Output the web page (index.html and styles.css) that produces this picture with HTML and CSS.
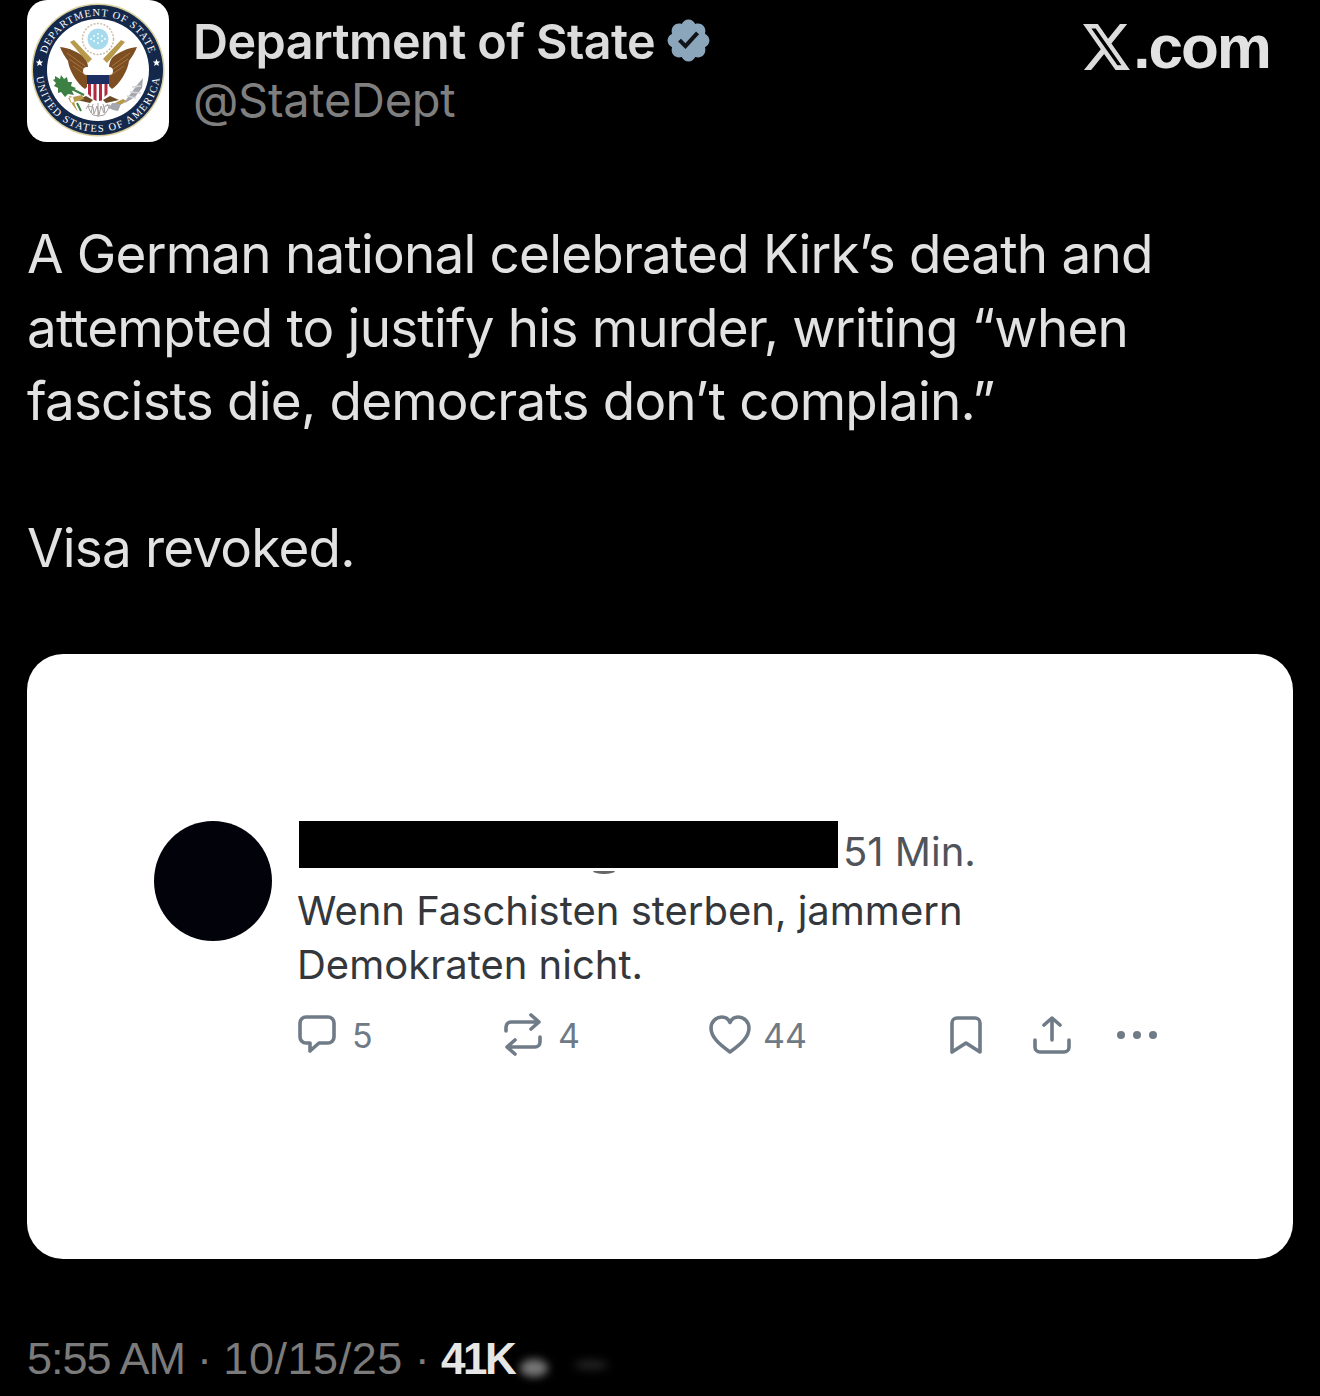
FILE: index.html
```html
<!DOCTYPE html>
<html lang="en">
<head>
<meta charset="utf-8">
<title>Department of State</title>
<link rel="stylesheet" href="styles.css">
</head>
<body>
<main class="post">
  <header class="head">
    <div class="seal">
      <svg viewBox="0 0 142 142" width="142" height="142">
        <defs>
          <path id="arcTop" d="M17 70a54 54 0 0 1 108 0"/>
          <path id="arcBottom" d="M9 70a62 62 0 0 0 124 0"/>
        </defs>
        <circle cx="71" cy="70" r="66.500" fill="#d9cf9c"/>
        <circle cx="71" cy="70" r="65" fill="#14284b"/>
        <circle cx="71" cy="70" r="51" fill="#fff"/>
        <text class="ring"><textPath href="#arcTop" startOffset="50%" text-anchor="middle">DEPARTMENT OF STATE</textPath></text>
        <text class="ring ring-low"><textPath href="#arcBottom" startOffset="50%" text-anchor="middle">UNITED STATES OF AMERICA</textPath></text>
        <path d="M12.500 59l1.100 2.400 2.600.2-2 1.700.7 2.600-2.400-1.400-2.300 1.400.6-2.600-2-1.700 2.600-.2zM129.500 59l1.100 2.400 2.600.2-2 1.700.7 2.600-2.400-1.400-2.300 1.400.6-2.600-2-1.700 2.600-.2z" fill="#fff"/>
        <circle cx="71" cy="39" r="15.500" fill="#fff" stroke="#c9b9a4" stroke-width="1.400" stroke-dasharray="2 1.400"/>
        <circle cx="71" cy="39" r="10.500" fill="#a6dbee"/>
        <g fill="#fff"><circle cx="71" cy="34" r=".9"/><circle cx="67" cy="36" r=".9"/><circle cx="75" cy="36" r=".9"/><circle cx="71" cy="38" r=".9"/><circle cx="67" cy="41" r=".9"/><circle cx="75" cy="41" r=".9"/><circle cx="71" cy="43" r=".9"/><circle cx="64" cy="39" r=".9"/><circle cx="78" cy="39" r=".9"/></g>
        <path d="M33 47c9 1 19 5 25 11 2 3 3 6 3 10v18l-3 3C50 84 42 70 41 61c-3-4-6-9-8-14z" fill="#7d4e22"/>
        <path d="M110 47c-9 1-19 5-25 11-2 3-3 6-3 10v18l3 3c8-5 16-19 17-28 3-4 6-9 8-14z" fill="#7d4e22"/>
        <path d="M40 53l18 13M46 66l13 9M42 59l16 11M103 53l-18 13M97 66l-13 9M101 59l-16 11" stroke="#a5763f" stroke-width="1" fill="none"/>
        <path d="M43 42l4-2 18 19-4 4zM98 42l-4-2-18 19 4 4z" fill="#b79a4b"/>
        <path d="M64 72c0-5 2-9 7-10 3 0 5 1 6 4l3 2-1 5H63z" fill="#fff"/>
        <circle cx="60" cy="71" r="4" fill="#fff"/><circle cx="82" cy="71" r="4" fill="#fff"/>
        <path d="M60 78h22v12c0 6-6 9-11 11-5-2-11-5-11-11z" fill="#fff"/>
        <path d="M61 84h3v13l-3-3zM66.500 84h3v17l-3-1.500zM72 84h3v16.500l-3 .5zM77.500 84h3v10l-3 3z" fill="#b0293c"/>
        <path d="M60 75h22v9H60z" fill="#1b2f63"/>
        <path d="M50 100l9-4 7 4-3 3zM92 100l-9-4-7 4 3 3z" fill="#6b4a25"/>
        <path d="M61 106l5 1 1 7 3-8 2 9 2-9 3 7 1-7 5-1-3 6-3 4-5 1-6-1-3-4z" fill="#fff" stroke="#a79f9f" stroke-width="1"/>
        <path d="M71 103v14M66 104l-2 9M76 104l2 9M62 104l-3 5M80 104l3 5" stroke="#a79f9f" stroke-width="1"/>
        <path d="M28 76l5 3 1-4 3 4 3-2 1 5 4 0-1 4 5 2-4 3 2 4-6-1-3 3-4-5-3 1 0-5-4-2 2-3-3-3 2-1z" fill="#3c8044"/>
        <path d="M43 88l14 7" stroke="#3c8044" stroke-width="2"/>
        <path d="M42 96l3 8 6 8-3-7-2-8zM41 98l14-3 2 4-13 4z" fill="#b79a4b"/>
        <path d="M50 103l4 8" stroke="#3c8044" stroke-width="2"/>
        <path d="M86 104l10-5 4 2-10 6z" fill="#b79a4b"/>
        <path d="M99 100l11-15 6-7-1 10-7 9-10 6z" fill="#a4a7ad"/>
        <path d="M105 87l9-1M103 92l11 1M100 96l9 2" stroke="#d5d7da" stroke-width="1.500"/>
        <path d="M85 103l-3 5 4 2 5 1 3-7z" fill="#a4a7ad"/>
      </svg>
    </div>
    <div class="identity">
      <div class="name-row">
        <span class="name">Department of State</span>
        <svg class="badge" viewBox="0 0 24 24" width="49" height="49"><path fill="#8ba5bb" d="M22.250 12c0-1.430-.880-2.670-2.190-3.340.460-1.390.200-2.900-.810-3.910s-2.520-1.270-3.910-.81c-.660-1.310-1.910-2.190-3.340-2.190s-2.670.880-3.330 2.190c-1.400-.460-2.910-.200-3.920.810s-1.260 2.520-.800 3.910c-1.310.670-2.200 1.910-2.200 3.340s.890 2.670 2.200 3.340c-.460 1.390-.210 2.900.800 3.910s2.520 1.260 3.910.810c.670 1.310 1.910 2.190 3.340 2.190s2.680-.880 3.340-2.190c1.390.450 2.900.200 3.910-.810s1.270-2.520.810-3.910c1.310-.670 2.190-1.910 2.190-3.340z"/><path fill="#101418" d="M10.540 16.200l-3.650-3.650 1.410-1.410 2.180 2.180 5.220-5.680 1.470 1.350z"/></svg>
      </div>
      <div class="handle">@StateDept</div>
    </div>
    <div class="brand">
      <svg class="x-logo" viewBox="1.250 2.250 21.600 19.500" width="47" height="46" preserveAspectRatio="none"><path fill="#dcdcdc" d="M18.244 2.250h3.308l-7.227 8.260 8.502 11.240H16.170l-5.214-6.817L4.990 21.750H1.680l7.730-8.835L1.254 2.250H8.080l4.713 6.231zm-1.161 17.520h1.833L7.084 4.126H5.117z"/></svg>
      <span class="dotcom">.com</span>
    </div>
  </header>

  <section class="body-text">
    <p>A German national celebrated Kirk’s death and<br>attempted to justify his murder, writing “when<br>fascists die, democrats don’t complain.”</p>
    <p>Visa revoked.</p>
  </section>

  <figure class="card">
    <div class="avatar"></div>
    <div class="reply">
      <div class="reply-head">
        <div class="redaction"></div>
        <span class="age">51 Min.</span>
        <span class="tail"></span>
      </div>
      <p class="reply-text">Wenn Faschisten sterben, jammern<br>Demokraten nicht.</p>
      <div class="actions">
        <div class="action a-reply">
          <svg viewBox="0 0 40 44" width="40" height="44"><path d="M9 4h22a6 6 0 0 1 6 6v14a6 6 0 0 1-6 6h-9l-9 8v-8H9a6 6 0 0 1-6-6V10a6 6 0 0 1 6-6z"/></svg>
          <span>5</span>
        </div>
        <div class="action a-repost">
          <svg viewBox="0 0 40 44" width="40" height="44"><path d="M3 18v-4a5 5 0 0 1 5-5h28M28 2l8 7-8 7M37 24v5a5 5 0 0 1-5 5H4M12 27l-8 7 8 7"/></svg>
          <span>4</span>
        </div>
        <div class="action a-like">
          <svg viewBox="0 0 42 40" width="42" height="40"><path d="M21 37C10 29 2 22 2 13 2 7 7 2 12.500 2c4 0 7 2 8.500 5.500C22.500 4 25.500 2 29.500 2 35 2 40 7 40 13c0 9-8 16-19 24z"/></svg>
          <span>44</span>
        </div>
        <div class="action a-save">
          <svg viewBox="0 0 34 40" width="34" height="40"><path d="M3 37V8a5 5 0 0 1 5-5h18a5 5 0 0 1 5 5v29l-14-9z"/></svg>
        </div>
        <div class="action a-share">
          <svg viewBox="0 0 40 40" width="40" height="40"><path d="M20 25V3M12 10l8-7 8 7M3 25v7a5 5 0 0 0 5 5h24a5 5 0 0 0 5-5v-7"/></svg>
        </div>
        <div class="action a-more">
          <i></i><i></i><i></i>
        </div>
      </div>
    </div>
  </figure>

  <footer class="meta">
    <span class="time">5:55 AM</span><span class="sep"> · </span><span class="date">10/15/25</span><span class="sep"> · </span><b>41K</b><span class="smudge"><i class="s1"></i><i class="s2"></i></span>
  </footer>
</main>
</body>
</html>
```
FILE: styles.css
```css
* { box-sizing: border-box; }
html, body { margin: 0; padding: 0; background: #000; }
body { width: 1320px; height: 1396px; overflow: hidden; font-family: Inter, "Liberation Sans", sans-serif; color: #e6e6e6; }
.post { padding: 0 27px; display: flex; flex-direction: column; }
.head { display: flex; align-items: flex-start; height: 142px; }
.seal { width: 142px; height: 142px; background: #fff; border-radius: 20px; flex: none; }
.seal svg { display: block; }
.ring { font-family: "Liberation Serif", serif; font-size: 10.500px; letter-spacing: 1px; fill: #fff; }
.ring-low { letter-spacing: 1.500px; }
.identity { margin-left: 24px; flex: 1; padding-top: 12px; }
.name-row { display: flex; align-items: center; gap: 9px; height: 58px; }
.name { font-size: 48.500px; font-weight: 600; letter-spacing: -.6px; color: #dcdcdc; }
.badge { margin-top: -2px; }
.handle { font-size: 47px; line-height: 60px; color: #7f7f7f; letter-spacing: -.3px; }
.brand { display: flex; align-items: flex-end; gap: 3px; margin: 24px 23px 0 0; height: 46px; }
.x-logo { display: block; }
.dotcom { font-size: 62px; font-weight: 700; line-height: 46px; letter-spacing: -2px; color: #e2e2e2; font-family: "Liberation Sans", sans-serif; }
.body-text { margin-top: 76px; }
.body-text p { margin: 0 0 73px; font-size: 53px; line-height: 73.500px; letter-spacing: -.8px; color: #e2e2e2; }
.card { height: 605px; background: #fff; border-radius: 36px; display: flex; color: #3c4046; padding: 167px 0 0 127px; gap: 25px; margin: -4px 0 0; }
.avatar { width: 118px; height: 120px; border-radius: 50%; background: #02030a; flex: none; }
.reply { display: flex; flex-direction: column; width: 860px; }
.reply-head { display: flex; align-items: flex-end; height: 47px; position: relative; }
.redaction { width: 539px; height: 47px; background: #000; margin-left: 2px; }
.age { font-size: 40px; line-height: 47px; margin-left: 5px; color: #50545a; height: 47px; padding-top: 7px; }
.tail { position: absolute; left: 296px; top: 47px; width: 22px; height: 6px; border-bottom: 3px solid #666; border-radius: 0 0 50% 50%; }
.reply-text { margin: 16px 0 0; font-size: 40px; line-height: 54px; letter-spacing: 0; color: #34373c; }
.actions { display: flex; align-items: center; height: 44px; margin-top: 21px; position: relative; color: #6f7a86; }
.action { display: flex; align-items: center; gap: 15px; font-size: 34px; flex: none; }
.action svg { fill: none; stroke: #707b88; stroke-width: 3.600; stroke-linecap: round; stroke-linejoin: round; display: block; }
.a-reply { width: 206px; }
.a-repost { width: 206px; }
.a-like { width: 240px; gap: 12px; }
.a-save { width: 83px; }
.a-share { width: 85px; }
.a-more { gap: 8px; }
.a-more i { width: 8px; height: 8px; background: #707b88; border-radius: 50%; display: block; }
.meta { display: flex; align-items: baseline; font-family: "Liberation Sans", sans-serif; font-size: 45px; line-height: 50px; margin-top: 75px; color: #7b7b7b; white-space: pre; }
.time { letter-spacing: -1px; }
.sep { letter-spacing: -.6px; }
.date { letter-spacing: .55px; }
.meta b { color: #e6e6e6; font-weight: 700; font-size: 44px; letter-spacing: -2.500px; }
.smudge { position: relative; width: 100px; }
.smudge i { position: absolute; display: block; border-radius: 50%; filter: blur(4px); }
.s1 { left: 6px; top: -15px; width: 28px; height: 18px; background: #777; }
.s2 { left: 60px; top: -14px; width: 34px; height: 10px; background: #222; }
```
